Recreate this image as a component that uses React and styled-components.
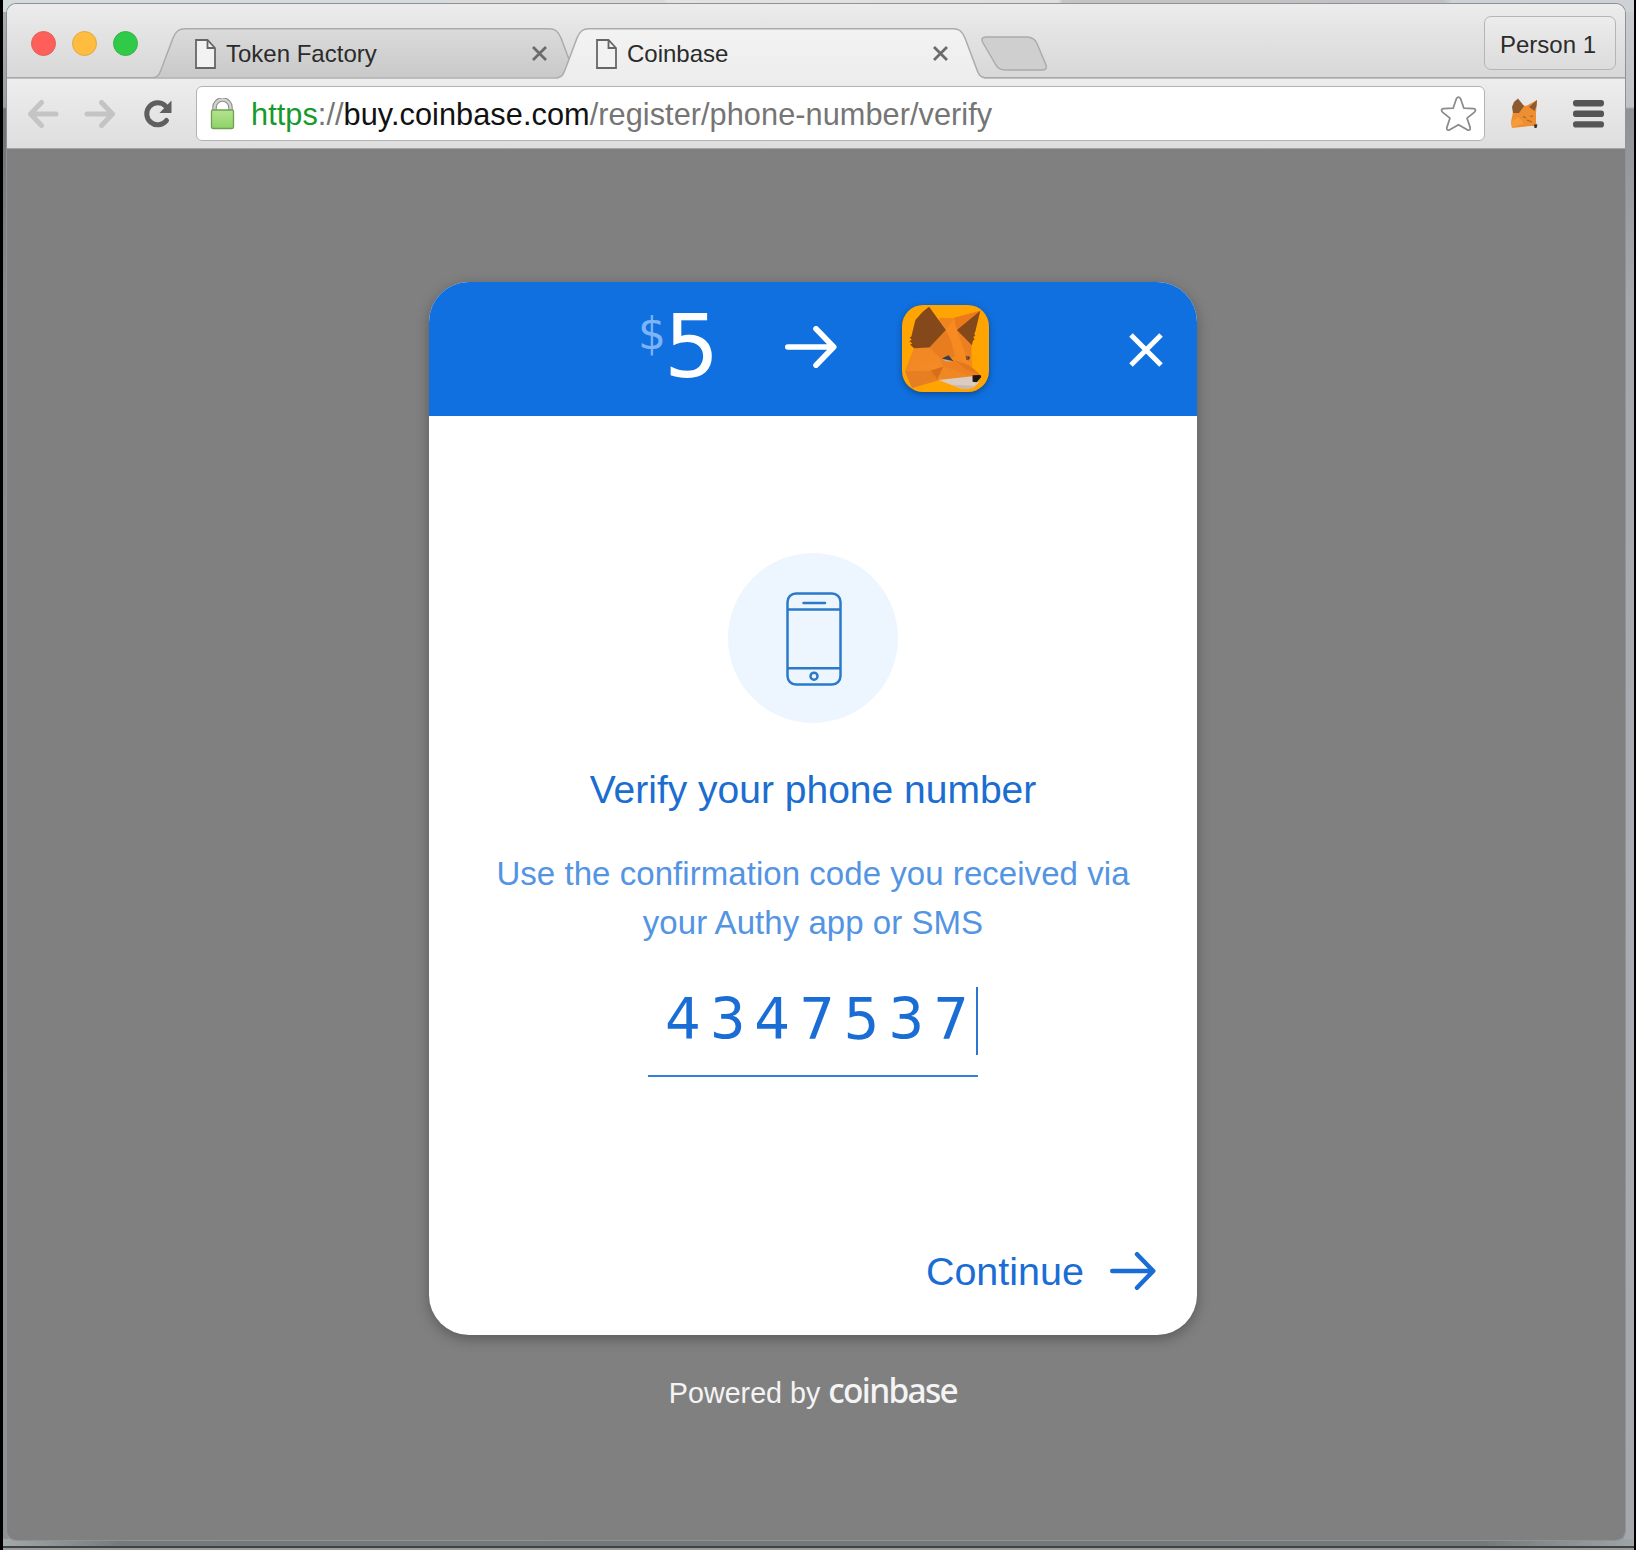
import React from "react";
import styled, { createGlobalStyle } from "styled-components";

const GlobalStyle = createGlobalStyle`
  * { box-sizing: border-box; }
  html, body { margin: 0; padding: 0; background: #000; }
  body { font-family: "Liberation Sans", Arial, sans-serif; }
  svg { display: block; flex: none; }
`;

const Screen = styled.div`
  width: 1636px;
  height: 1550px;
  padding: 0 2px 0 3px;
  background: #000;
  overflow: hidden;
`;

const Desktop = styled.div`
  height: 1550px;
  padding: 4px 9px 0 4px;
  border-bottom: 2px solid #9b9d9d;
  background:
    linear-gradient(#3f4344, #3f4344) 0 1546px / 100% 2px no-repeat,
    linear-gradient(90deg, #a3a9a9, #737a7b 120px, #737879 1480px, #9fa5a6) 0 1539px / 100% 7px no-repeat,
    linear-gradient(90deg, #d4dbdc 440px, #d9dada 445px, #dadada 660px, #e2e2e2 665px, #dedede 1055px, #c3c4c6 1060px, #bfc1c4 1440px, #ced2d6 1450px) 0 0 / 100% 12px no-repeat,
    linear-gradient(#c9cdd1, #bfc3c7 107px, #8f9397 109px, #a4a7ab 300px, #a8abb1 900px, #a4a8ac) 100% 0 / 10px 100% no-repeat,
    linear-gradient(#a9afb1, #9ba1a3 107px, #6d7375 109px, #858b8d 300px, #8c9294) 0 0 / 5px 100% no-repeat,
    #959b9d;
`;

const Window = styled.div`
  width: 1618px;
  height: 1536px;
  display: flex;
  flex-direction: column;
  border-radius: 9px;
  overflow: hidden;
  box-shadow: 0 0 0 1px #8f9293;
`;

const TabStrip = styled.div`
  height: 75px;
  flex: none;
  display: flex;
  align-items: flex-start;
  padding: 0 9px 0 24px;
  background:
    linear-gradient(#a8a8a8, #a8a8a8) 0 73px / 100% 1.5px no-repeat,
    linear-gradient(#ececec, #e4e4e4 35%, #d7d7d7);
`;

const Lights = styled.div`
  display: flex;
  gap: 16px;
  width: 122px;
  padding-top: 26.5px;
`;

const Light = styled.span`
  width: 25px;
  height: 25px;
  border-radius: 50%;
  background: ${(p) => p.$color};
  border: 1px solid ${(p) => p.$edge};
`;

const TabBox = styled.div`
  position: relative;
  z-index: ${(p) => (p.$active ? 2 : 1)};
  width: 428px;
  height: 51px;
  margin: 24px ${(p) => (p.$active ? 0 : -24)}px 0 0;
  padding: ${(p) => (p.$active ? "0 37px 0 39px" : "0 34px 0 42px")};
  display: flex;
  align-items: center;
`;

const TabShape = styled.svg`
  position: absolute;
  left: 0;
  top: 0;
  z-index: -1;
`;

const TabTitle = styled.span`
  flex: 1;
  margin-left: 10px;
  font-size: 24px;
  line-height: 30px;
  color: #2b2b2b;
  white-space: nowrap;
`;

const NewTab = styled.div`
  margin: 32px 0 0 -5px;
`;

const Person = styled.button`
  width: 132px;
  height: 54px;
  margin: 12px 0 0 auto;
  padding: 3px 4px 0 0;
  border: 1.5px solid #b5b5b5;
  border-radius: 7px;
  background: linear-gradient(#ececec, #dcdcdc);
  font: 24px/48px "Liberation Sans", Arial, sans-serif;
  color: #2c2c2c;
`;

const Toolbar = styled.div`
  height: 70px;
  flex: none;
  display: flex;
  align-items: center;
  padding: 0 21px 0 20px;
  background: linear-gradient(#ededed, #dedede);
  border-bottom: 1px solid #a5a5a5;
`;

const NavButtons = styled.div`
  width: 169px;
  display: flex;
  align-items: center;
`;

const Omnibox = styled.div`
  width: 1289px;
  height: 55px;
  display: flex;
  align-items: center;
  padding: 0 7px 0 13px;
  border: 1.5px solid #b3b3b3;
  border-radius: 6px;
  background: #fff;
`;

const Url = styled.div`
  flex: 1;
  margin-left: 16px;
  padding-top: 2px;
  font-size: 30.7px;
  line-height: 40px;
  letter-spacing: 0.06px;
  white-space: nowrap;
  color: #757575;
`;
const Secure = styled.span`color: #169a2b;`;
const Host = styled.span`color: #111;`;

const Page = styled.main`
  flex: 1;
  background: #808080;
  padding: 133px 0 0 422px;
`;

const Column = styled.div`
  width: 768px;
  display: flex;
  flex-direction: column;
  align-items: center;
`;

const Card = styled.section`
  width: 768px;
  height: 1053px;
  display: flex;
  flex-direction: column;
  border-radius: 40px;
  background: #fff;
  overflow: hidden;
  box-shadow: 0 4px 14px rgba(0, 0, 0, 0.3);
`;

const CardHeader = styled.header`
  height: 133.5px;
  flex: none;
  display: flex;
  align-items: center;
  padding: 0 34px 0 209px;
  background: #1070df;
`;

const Price = styled.div`
  display: flex;
  align-items: flex-start;
  width: 82px;
  margin-right: 65px;
  margin-top: -3px;
  font-family: "DejaVu Sans", Verdana, sans-serif;
`;
const Currency = styled.span`
  padding-top: 12px;
  margin-right: -2px;
  font-size: 44px;
  line-height: 50px;
  color: #7db4f8;
`;
const Amount = styled.span`
  font-size: 87px;
  line-height: 100px;
  color: #fff;
`;

const HeaderArrow = styled.div`
  color: #fff;
  margin-top: -4px;
`;

const AppIcon = styled.div`
  width: 87px;
  height: 87px;
  margin: 0 auto 0 65px;
  border-radius: 21px;
  overflow: hidden;
  background: #ffa400;
  box-shadow: 0 2px 6px rgba(0, 0, 0, 0.35);
`;

const CloseButton = styled.div`
  padding-top: 3px;
`;

const CardBody = styled.div`
  flex: 1;
  display: flex;
  flex-direction: column;
  align-items: center;
  padding: 137.5px 41px 40px;
`;

const Badge = styled.div`
  width: 170px;
  height: 170px;
  border-radius: 50%;
  background: #edf5fe;
  display: flex;
  align-items: center;
  justify-content: center;
  padding: 1px 0 0 2px;
`;

const Title = styled.h1`
  margin: 43px 0 0;
  font-size: 39px;
  font-weight: 400;
  line-height: 48px;
  color: #1c6dd0;
  white-space: nowrap;
`;

const Hint = styled.p`
  margin: 35px 0 0;
  font-size: 33px;
  line-height: 49px;
  letter-spacing: 0.05px;
  text-align: center;
  color: #5394e3;
  white-space: nowrap;
`;

const CodeInput = styled.div`
  width: 330px;
  height: 90px;
  margin-top: 40px;
  padding-left: 17px;
  display: flex;
  align-items: flex-start;
  border-bottom: 2px solid #3580dc;
  font: 56.5px/65px "DejaVu Sans", Verdana, sans-serif;
  letter-spacing: 8.7px;
  color: #1a6dd4;
  white-space: nowrap;
`;

const Caret = styled.span`
  width: 2px;
  height: 68px;
  margin-left: -2px;
  background: #2c76d2;
`;

const Continue = styled.div`
  margin-top: auto;
  align-self: flex-end;
  display: flex;
  align-items: center;
  gap: 26px;
  font-size: 39.5px;
  line-height: 48px;
  color: #1a6dd4;
`;

const Powered = styled.footer`
  display: flex;
  align-items: baseline;
  margin-top: 31px;
  gap: 8px;
  font-size: 28.7px;
  line-height: 48px;
  color: #f4f4f4;
`;
const Brand = styled.span`
  font: 500 33.5px/48px "Noto Sans", "Open Sans", sans-serif;
  letter-spacing: -1.7px;
`;

function FileIcon() {
  return (
    <svg width="21" height="30" viewBox="0 0 21 30" fill="none" stroke="#666" strokeWidth="1.8">
      <path d="M1 1h11.5L20 9v20H1z" fill="#f2f2f2" />
      <path d="M12.5 1v8H20" />
    </svg>
  );
}

function TabClose() {
  return (
    <svg width="15" height="15" viewBox="0 0 15 15" stroke="#6b6b6b" strokeWidth="2.8">
      <path d="M1 1l13 13M14 1L1 14" />
    </svg>
  );
}

function Tab({ title, active }) {
  const id = active ? "tab-on" : "tab-off";
  return (
    <TabBox $active={active}>
      <TabShape width="428" height="51" viewBox="0 0 428 51">
        <defs>
          <linearGradient id={id} x1="0" y1="0" x2="0" y2="1">
            <stop offset="0" stopColor={active ? "#f3f3f3" : "#dbdbdb"} />
            <stop offset="1" stopColor={active ? "#ededed" : "#c9c9c9"} />
          </linearGradient>
        </defs>
        <path
          d={`M0 ${active ? 51 : 49.5}C5 49 6 47 8 42L20 10C23 3 26 .8 32 .8H396C402 .8 405 3 408 10L420 42C422 47 423 49 428 ${active ? 51 : 49.5}Z`}
          fill={`url(#${id})`}
        />
        <path
          d="M0 49.7C5 49 6 47 8 42L20 10C23 3 26 .8 32 .8H396C402 .8 405 3 408 10L420 42C422 47 423 49 428 49.7"
          fill="none" stroke="#ababab" strokeWidth="1.5"
        />
      </TabShape>
      <FileIcon />
      <TabTitle>{title}</TabTitle>
      <TabClose />
    </TabBox>
  );
}

function NavArrow({ flip }) {
  return (
    <svg width="32" height="30" viewBox="0 0 32 30" fill="none" stroke="#c4c4c4" strokeWidth="5"
      strokeLinecap="round" strokeLinejoin="round" style={{ transform: flip ? "scaleX(-1)" : "none" }}>
      <path d="M29 15H5M14.500 3.500L3.500 15L14.500 26.500" />
    </svg>
  );
}

function Reload() {
  return (
    <svg width="30" height="30" viewBox="0 0 30 30" fill="none">
      <path d="M23.500 21.500A11 11 0 1 1 22.500 7" stroke="#5f5f5f" strokeWidth="5" strokeLinecap="round" />
      <path d="M28.500 1.500V14H16.500z" fill="#5f5f5f" />
    </svg>
  );
}

function Lock() {
  return (
    <svg width="25" height="32" viewBox="0 0 25 32" fill="none">
      <defs>
        <linearGradient id="lock" x1="0" y1="0" x2="0" y2="1">
          <stop offset="0" stopColor="#b4e48e" />
          <stop offset="1" stopColor="#8fd267" />
        </linearGradient>
      </defs>
      <path d="M4.500 13V9.500a8 8 0 0 1 16 0V13" stroke="#8e8e8e" strokeWidth="4.600" />
      <path d="M4.500 13V9.500a8 8 0 0 1 16 0V13" stroke="#d2d2d2" strokeWidth="2.400" />
      <rect x="1.500" y="12" width="22" height="18.500" rx="1.500" fill="url(#lock)" stroke="#6f9e55" strokeWidth="1.300" />
    </svg>
  );
}

function Star() {
  return (
    <svg width="37" height="36" viewBox="0 0 38 37" fill="#fff" stroke="#8b8b8b" strokeWidth="1.800" strokeLinejoin="round">
      <path d="M16.800 2.800Q19 -.5 21.200 2.800L24.500 12.500L34.500 13Q37.800 13.500 35.500 16.500L27.800 22.800L31 32.500Q31.500 36 28 34.800L19 29.500L10 34.800Q6.500 36 7 32.500L10.200 22.800L2.500 16.500Q.2 13.500 3.500 13L13.500 12.500Z" />
    </svg>
  );
}

function FoxSmall() {
  return (
    <svg width="28" height="31" viewBox="0 0 28 31">
      <path d="M3 14L10 11L12 7L16 8L27 2L26 15L26 24L27 28L20 28L2 30L1 24z" fill="#ee8e30" />
      <path d="M1 24L8 19L14 25L2 30z" fill="#f59b3d" />
      <path d="M8 .5L14 8L9 15L3 15L2 9L4 4z" fill="#8d5a30" />
      <path d="M27 2L26.500 8L24.500 13L19 9z" fill="#8d5a30" />
      <path d="M13 18.500l3 1.500M20 18.500l3-.5M17 22l5 2" stroke="#9c6a35" strokeWidth="1.200" />
      <path d="M24 26.500h3.500l-1 3.500h-2z" fill="#3b2f28" />
    </svg>
  );
}

function Menu() {
  return (
    <svg width="31" height="28" viewBox="0 0 31 28" fill="#555">
      <rect y="0" width="31" height="6.400" rx="2.800" />
      <rect y="10.600" width="31" height="6.400" rx="2.800" />
      <rect y="21.200" width="31" height="6.400" rx="2.800" />
    </svg>
  );
}

function Fox() {
  return (
    <svg width="87" height="87" viewBox="0 0 260 260">
      <path d="M112 40L155 40L234 17L206 110L210 185L236 212L228 225L108 226L30 248L9 198L36 129L82 127z" fill="#f28a1f" />
      <path d="M155 38L234 17L164 75z" fill="#ea7a1c" />
      <path d="M112 38L155 40L160 75L131 75z" fill="#f28420" />
      <path d="M131 75L145 100L158 156L112 158L82 127z" fill="#e87d20" />
      <path d="M155 40L164 75L198 172L176 164L131 75z" fill="#f78b22" />
      <path d="M164 75L208 118L206 150L198 170z" fill="#ec8020" />
      <path d="M36 129L82 127L112 158L9 198z" fill="#f28824" />
      <path d="M9 198L86 196L110 224L30 248z" fill="#e77e22" />
      <path d="M9 198L112 158L124 184L86 196z" fill="#f38a25" />
      <path d="M86 196L124 184L106 222z" fill="#d96d1a" />
      <path d="M124 184L205 212L106 222z" fill="#ee8824" />
      <path d="M112 158L165 168L236 210L208 212L124 184z" fill="#ef8020" />
      <path d="M158 165L200 180L236 210L190 192z" fill="#e3771e" />
      <path d="M81 5L131 75L82 127L36 129L24 118L31 115L22 108L29 104L23 97L28 94L40 45L62 20z" fill="#84481a" />
      <path d="M234 17L219 80L216 85L219 92L213 96L217 103L212 107L209 120L164 75z" fill="#84481a" />
      <path d="M119 160L139 150L154 168z" fill="#35404c" />
      <path d="M119 162L154 168L132 169z" fill="#b8b5ae" />
      <path d="M190 152L203 155L200 165L192 164z" fill="#8e4d25" />
      <path d="M197 154l6 2l-3 7z" fill="#35404c" />
      <path d="M109 224L211 213L212 230L232 230L212 247L182 252z" fill="#dccbc1" />
      <path d="M182 252L150 238L220 242L210 249z" fill="#cbb8ac" />
      <path d="M211 210L234 209L237 215L229 224L223 231L211 229z" fill="#1d1713" />
    </svg>
  );
}

function Arrow({ width, height, stroke }) {
  const r = stroke / 2;
  const mid = height / 2;
  return (
    <svg width={width} height={height} viewBox={`0 0 ${width} ${height}`} fill="none" stroke="currentColor"
      strokeWidth={stroke} strokeLinecap="round" strokeLinejoin="round">
      <path d={`M${r} ${mid}H${width - r - 1}M${width - mid} ${r}L${width - r - 0.5} ${mid}L${width - mid} ${height - r}`} />
    </svg>
  );
}

function Phone() {
  return (
    <svg width="56" height="94" viewBox="0 0 56 94" fill="none" stroke="#2b79c9" strokeWidth="2.500">
      <rect x="1.500" y="1.500" width="53" height="91" rx="8.500" />
      <path d="M1.500 17.500h53M1.500 76.200h53" />
      <path d="M17.500 11h21.500" strokeLinecap="round" />
      <circle cx="28" cy="84.200" r="3.500" />
    </svg>
  );
}

const Spacer = styled.span`
  flex: none;
  width: ${(p) => p.$w}px;
`;

export default function App() {
  return (
    <Screen>
      <GlobalStyle />
      <Desktop>
        <Window>
          <TabStrip>
            <Lights>
              <Light $color="#fe5f5a" $edge="#e2605c" />
              <Light $color="#febd3f" $edge="#dfa945" />
              <Light $color="#2fca48" $edge="#3bb24c" />
            </Lights>
            <Tab title="Token Factory" />
            <Tab title="Coinbase" active />
            <NewTab>
              <svg width="68" height="36" viewBox="0 0 68 36">
                <path d="M6 1H47Q54 1 57 7.500L66 29Q67.500 34 62 34H25Q18 34 15 27.500L2.500 6Q.5 1 6 1Z" fill="#cfcfcf" stroke="#aaa" strokeWidth="1.400" />
              </svg>
            </NewTab>
            <Person>Person 1</Person>
          </TabStrip>
          <Toolbar>
            <NavButtons>
              <NavArrow />
              <Spacer $w={25} />
              <NavArrow flip />
              <Spacer $w={27} />
              <Reload />
            </NavButtons>
            <Omnibox>
              <Lock />
              <Url>
                <Secure>https</Secure>://<Host>buy.coinbase.com</Host>/register/phone-number/verify
              </Url>
              <Star />
            </Omnibox>
            <Spacer $w={25} />
            <FoxSmall />
            <Spacer $w={35} />
            <Menu />
          </Toolbar>
          <Page>
            <Column>
              <Card>
                <CardHeader>
                  <Price>
                    <Currency>$</Currency>
                    <Amount>5</Amount>
                  </Price>
                  <HeaderArrow>
                    <Arrow width={52} height={42} stroke={5.6} />
                  </HeaderArrow>
                  <AppIcon><Fox /></AppIcon>
                  <CloseButton>
                    <svg width="34" height="34" viewBox="0 0 34 34" stroke="#fff" strokeWidth="5">
                      <path d="M2 2L32 32M32 2L2 32" />
                    </svg>
                  </CloseButton>
                </CardHeader>
                <CardBody>
                  <Badge><Phone /></Badge>
                  <Title>Verify your phone number</Title>
                  <Hint>
                    Use the confirmation code you received via
                    <br />
                    your Authy app or SMS
                  </Hint>
                  <CodeInput>
                    4347537
                    <Caret />
                  </CodeInput>
                  <Continue>
                    Continue
                    <Arrow width={46} height={38} stroke={4.5} />
                  </Continue>
                </CardBody>
              </Card>
              <Powered>
                Powered by
                <Brand>coinbase</Brand>
              </Powered>
            </Column>
          </Page>
        </Window>
      </Desktop>
    </Screen>
  );
}
